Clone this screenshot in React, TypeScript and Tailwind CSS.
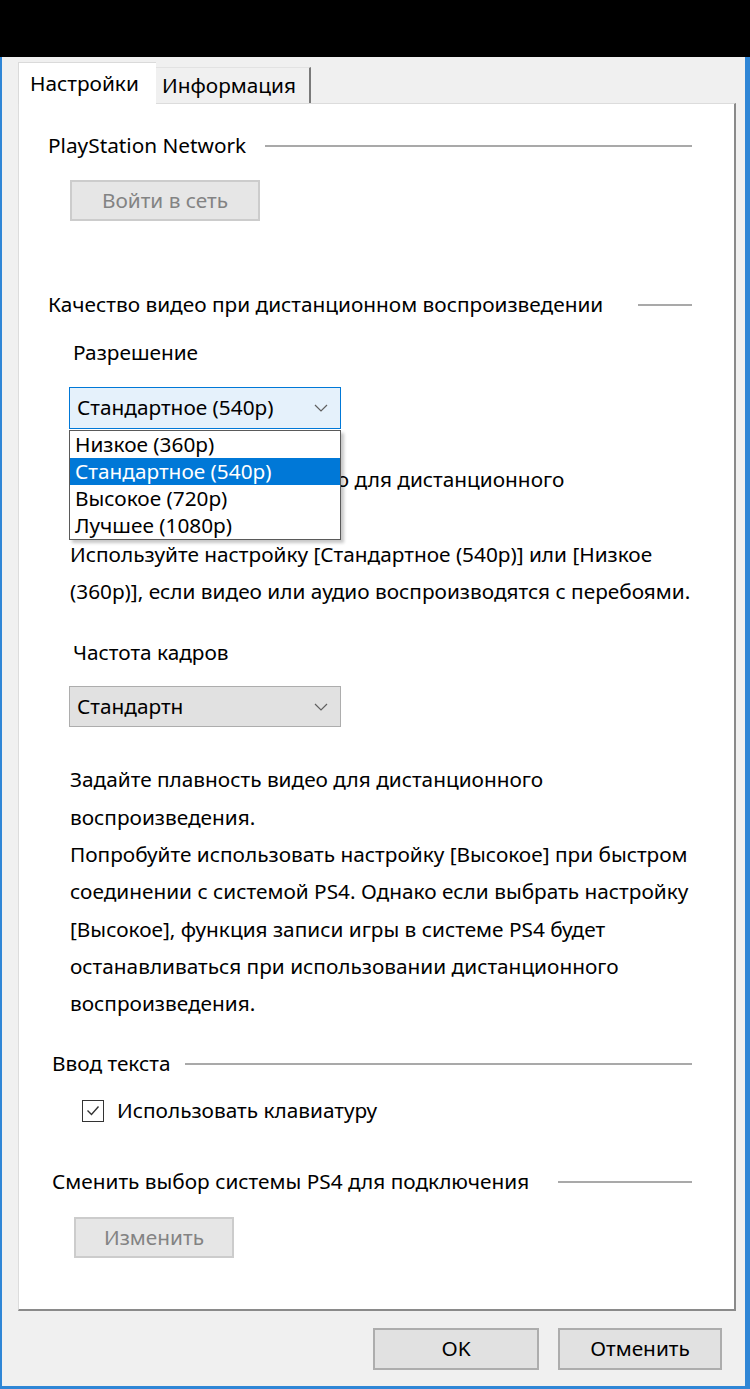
import React from 'react';

function Chevron() {
  return (
    <svg width="14" height="8" viewBox="0 0 14 8" fill="none">
      <path d="M1 1 L7 7 L13 1" stroke="#606060" strokeWidth="1.2" />
    </svg>
  );
}

function GroupHeader({ title, lineClass, padClass }: { title: string; lineClass: string; padClass: string }) {
  return (
    <div className={`flex h-[28px] items-center justify-between pr-[42px] ${padClass}`}>
      <span className="whitespace-nowrap">{title}</span>
      <div className={`h-[2px] bg-[#a9a9a9] ${lineClass}`} />
    </div>
  );
}

const resolutionText = [
  'Задайте разрешение видео для дистанционного',
  'воспроизведения.',
  'Используйте настройку [Стандартное (540р)] или [Низкое',
  '(360р)], если видео или аудио воспроизводятся с перебоями.',
];

const framerateText = [
  'Задайте плавность видео для дистанционного',
  'воспроизведения.',
  'Попробуйте использовать настройку [Высокое] при быстром',
  'соединении с системой PS4. Однако если выбрать настройку',
  '[Высокое], функция записи игры в системе PS4 будет',
  'останавливаться при использовании дистанционного',
  'воспроизведения.',
];

const options = ['Низкое (360р)', 'Стандартное (540р)', 'Высокое (720р)', 'Лучшее (1080р)'];

export default function App() {
  return (
    <div className="flex h-[1389px] w-[750px] flex-col bg-black font-['Noto_Sans','Liberation_Sans',sans-serif] text-[20.8px] text-black">
      <div className="h-[57px] shrink-0" />

      {/* Dialog */}
      <div className="flex flex-1 flex-col border-b-[3px] border-l-2 border-r-[5px] border-[#2f86d6] bg-[#f0f0f0] pl-[16px]">
        {/* Tabs */}
        <div className="flex h-[46px] items-end">
          <div className="relative z-10 -mb-[1px] flex h-[42px] w-[138px] items-center border-l border-t border-[#dadada] bg-white pl-[11px]">
            Настройки
          </div>
          <div className="flex h-[36px] w-[155px] items-center border-r-2 border-t border-[#e2e2e2] border-r-[#7a7a7a] bg-[#f0f0f0] pl-[6px]">
            Информация
          </div>
        </div>

        {/* Panel */}
        <div className="flex h-[1208px] w-[718px] flex-col border-l border-t border-[#dcdcdc] border-b-2 border-r-2 border-b-[#8a8a8a] border-r-[#8a8a8a] bg-white">
          <div className="mt-[28px]">
            <GroupHeader title="PlayStation Network" lineClass="w-[427px]" padClass="pl-[29px]" />
          </div>
          <div className="ml-[51px] mt-[20px] flex h-[41px] w-[190px] items-center justify-center border-2 border-[#cccccc] bg-[#e6e6e6] text-[#838383]">
            Войти в сеть
          </div>

          <div className="mt-[70px]">
            <GroupHeader title="Качество видео при дистанционном воспроизведении" lineClass="w-[54px]" padClass="pl-[29px]" />
          </div>
          <div className="mt-[20px] flex h-[28px] items-center pl-[54px]">Разрешение</div>

          <div className="relative ml-[50px] mt-[20px] w-[272px]">
            <div className="flex h-[42px] items-center justify-between border border-[#0078d7] bg-[#e5f1fb] pl-[7px] pr-[12px]">
              <span>Стандартное (540р)</span>
              <Chevron />
            </div>
            <div className="absolute left-0 top-[43px] z-20 w-[272px] border border-[#5a5a5a] bg-white shadow-[3px_3px_3px_rgba(0,0,0,0.22)]">
              {options.map((o, i) => (
                <div
                  key={o}
                  className={`flex h-[27px] items-center pl-[5px] ${i === 1 ? 'bg-[#0078d7] text-white' : ''}`}
                >
                  {o}
                </div>
              ))}
            </div>
          </div>

          <div className="mt-[32px] pl-[51px] leading-[37.33px]">
            {resolutionText.map((l, i) => (
              <div key={i} className="whitespace-nowrap">{l}</div>
            ))}
          </div>

          <div className="mt-[28px] flex h-[28px] items-center pl-[54px]">Частота кадров</div>
          <div className="ml-[50px] mt-[20px] flex h-[41px] w-[272px] items-center justify-between border border-[#adadad] bg-[#e1e1e1] pl-[7px] pr-[12px]">
            <span>Стандартн</span>
            <Chevron />
          </div>

          <div className="mt-[34px] pl-[51px] leading-[37.33px]">
            {framerateText.map((l, i) => (
              <div key={i} className="whitespace-nowrap">{l}</div>
            ))}
          </div>

          <div className="mt-[27px]">
            <GroupHeader title="Ввод текста" lineClass="w-[507px]" padClass="pl-[33px]" />
          </div>
          <div className="mt-[19px] flex h-[28px] items-center gap-[13px] pl-[63px]">
            <div className="flex h-[22px] w-[22px] items-center justify-center border-[1.5px] border-[#333333] bg-white">
              <svg width="14" height="11" viewBox="0 0 14 11" fill="none">
                <path d="M1.5 5.5 L5.5 9.5 L12.5 1.5" stroke="#333333" strokeWidth="1.4" />
              </svg>
            </div>
            <span>Использовать клавиатуру</span>
          </div>

          <div className="mt-[43px]">
            <GroupHeader title="Сменить выбор системы PS4 для подключения" lineClass="w-[134px]" padClass="pl-[33px]" />
          </div>
          <div className="ml-[55px] mt-[21px] flex h-[41px] w-[160px] items-center justify-center border-2 border-[#cccccc] bg-[#e6e6e6] text-[#838383]">
            Изменить
          </div>
        </div>

        {/* Footer buttons */}
        <div className="mt-[17px] flex justify-end gap-[19px] pr-[23px]">
          <div className="flex h-[42px] w-[166px] items-center justify-center border-2 border-[#adadad] bg-[#e1e1e1]">OK</div>
          <div className="flex h-[42px] w-[164px] items-center justify-center border-2 border-[#adadad] bg-[#e1e1e1]">Отменить</div>
        </div>
      </div>
    </div>
  );
}
